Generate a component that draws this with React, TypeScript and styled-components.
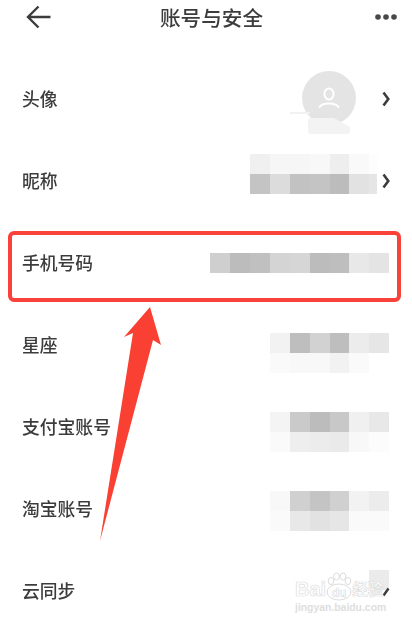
import React from "react";
import styled, { createGlobalStyle } from "styled-components";

const GlobalStyle = createGlobalStyle`
  html, body {
    margin: 0;
    padding: 0;
    background: #fff;
  }
`;

const Screen = styled.div`
  position: relative;
  width: 412px;
  height: 624px;
  overflow: hidden;
  background: #fff;
  color: #3c3c3c;
  font-family: "Noto Sans CJK SC", "Liberation Sans", sans-serif;
`;

const Header = styled.header`
  display: grid;
  grid-template-columns: 1fr auto 1fr;
  align-items: center;
  height: 34px;
  margin-bottom: 24px;
  padding: 0 15px 0 26px;
`;

const Title = styled.h1`
  margin: 0;
  font-size: 20.6px;
  font-weight: 500;
  line-height: 34px;
  filter: blur(0.4px);
`;

const HeaderIcon = styled.svg<{ $end?: boolean }>`
  display: block;
  justify-self: ${({ $end }) => ($end ? "end" : "start")};
  filter: blur(0.3px);
`;

const Row = styled.div`
  position: relative;
  display: flex;
  align-items: center;
  height: 82px;
  padding: 0 23px 0 22px;
`;

const Label = styled.span`
  flex: 1;
  padding-bottom: 2px;
  font-size: 17.8px;
  font-weight: 500;
  line-height: 26px;
  filter: blur(0.4px);
`;

const Mosaic = styled.div<{ $shift: number; $end?: boolean }>`
  display: flex;
  flex-direction: column;
  margin-top: ${({ $shift }) => ($shift > 0 ? $shift : 0)}px;
  margin-bottom: ${({ $shift }) => ($shift < 0 ? -$shift : 0)}px;
  margin-right: ${({ $end }) => ($end ? 0 : 5)}px;
`;

const MosaicLine = styled.div`
  display: flex;
  height: 20px;
`;

const Cell = styled.div<{ $tone: string; $w: number }>`
  width: ${({ $w }) => $w}px;
  background: ${({ $tone }) => $tone};
`;

const Chevron = styled.svg`
  display: block;
  flex: none;
  margin-right: -1px;
  filter: blur(0.3px);
`;

const Avatar = styled.div`
  position: relative;
  display: flex;
  align-items: center;
  justify-content: center;
  width: 54px;
  height: 54px;
  margin-right: 26px;
  margin-bottom: 2px;
  border-radius: 50%;
  background: #e4e4e4;
`;

const AvatarSmear = styled.div`
  position: absolute;
  left: 6px;
  top: 47px;
  width: 42px;
  height: 16px;
  border-radius: 3px;
  background: #f3f3f3;
  clip-path: polygon(0 0, 62% 0, 100% 55%, 100% 100%, 0 100%);
`;

const AvatarStreak = styled.div`
  position: absolute;
  left: -12px;
  top: 41px;
  width: 20px;
  height: 2px;
  background: #f1f1f1;
`;

const CutChevron = styled.svg`
  position: absolute;
  right: 22px;
  top: 37px;
`;

const RedFrame = styled.div`
  position: absolute;
  left: 8px;
  top: 231px;
  width: 393px;
  height: 71px;
  box-sizing: border-box;
  border: 4px solid #f9423a;
  border-radius: 6px;
`;

const RedArrow = styled.svg`
  position: absolute;
  left: 95px;
  top: 303px;
`;

const Watermark = styled.div`
  position: absolute;
  left: 295px;
  top: 570px;
  display: flex;
  flex-direction: column;
  width: 92px;
`;

const MarkLine = styled.div`
  display: flex;
  align-items: flex-end;
  height: 32px;
`;

const MarkWord = styled.span<{ $size: number }>`
  font-family: "Liberation Sans", "Noto Sans CJK SC", sans-serif;
  font-size: ${({ $size }) => $size}px;
  font-weight: 700;
  line-height: 25px;
  color: #fff;
  -webkit-text-stroke: 0.7px #e0e0e0;
`;

const MarkPaw = styled.div`
  position: relative;
  display: flex;
  align-items: flex-end;
  justify-content: center;
  width: 28px;
  height: 30px;
  margin: 0 -1px;
  font-family: "Liberation Sans", sans-serif;
  font-size: 12px;
  font-weight: 700;
  line-height: 18px;
  color: #fff;
  -webkit-text-stroke: 0.6px #dcdcdc;
`;

const PawShape = styled.svg`
  position: absolute;
  left: 0;
  top: 0;
  z-index: -0;
`;

const PawText = styled.span`
  position: relative;
`;

const MarkUrl = styled.span`
  font-family: "Liberation Sans", sans-serif;
  font-size: 10.4px;
  font-weight: 700;
  line-height: 12px;
  color: #dedede;
  white-space: nowrap;
`;

type Tone = [string, number];

type Item = {
  label: string;
  lines?: Tone[][];
  shift?: number;
  chevron?: boolean;
  avatar?: boolean;
  cut?: boolean;
};

const items: Item[] = [
  { label: "头像", avatar: true, chevron: true },
  {
    label: "昵称",
    shift: -14,
    chevron: true,
    lines: [
      [["#f0f0f0", 20], ["#f6f6f6", 20], ["#f6f6f6", 20], ["#f8f8f8", 20], ["#eeeeee", 19], ["#f9f9f9", 20], ["#fdfdfd", 8]],
      [["#c4c4c4", 20], ["#dcdcdc", 20], ["#c2c2c2", 20], ["#c4c4c4", 20], ["#bcbcbc", 19], ["#e2e2e2", 20], ["#e6e6e6", 8]],
    ],
  },
  {
    label: "手机号码",
    lines: [
      [["#cfcfcf", 20], ["#bcbcbc", 20], ["#c0c0c0", 20], ["#d4d4d4", 20], ["#d6d6d6", 20], ["#bcbcbc", 20], ["#bebebe", 19], ["#e8e8e8", 20], ["#e4e4e4", 20]],
    ],
  },
  {
    label: "星座",
    shift: 15,
    lines: [
      [["#f2f2f2", 20], ["#bebebe", 20], ["#d2d2d2", 20], ["#bebebe", 19], ["#ececec", 20], ["#e6e6e6", 20]],
      [["#fafafa", 20], ["#f8f8f8", 20], ["#f8f8f8", 20], ["#f2f2f2", 19], ["#fafafa", 20], ["#ffffff", 20]],
    ],
  },
  {
    label: "支付宝账号",
    shift: 9,
    lines: [
      [["#f4f4f4", 20], ["#cacaca", 20], ["#bcbcbc", 20], ["#c8c8c8", 19], ["#f0f0f0", 20], ["#e8e8e8", 20]],
      [["#fafafa", 20], ["#eeeeee", 20], ["#ececec", 20], ["#eaeaea", 19], ["#f8f8f8", 20], ["#fcfcfc", 20]],
    ],
  },
  {
    label: "淘宝账号",
    shift: 4,
    lines: [
      [["#f8f8f8", 20], ["#d0d0d0", 20], ["#c4c4c4", 20], ["#d0d0d0", 19], ["#f2f2f2", 20], ["#ececec", 20]],
      [["#fafafa", 20], ["#e8e8e8", 20], ["#e2e2e2", 20], ["#e6e6e6", 19], ["#fafafa", 20], ["#fafafa", 20]],
    ],
  },
  {
    label: "云同步",
    shift: -22,
    cut: true,
    lines: [[["#ebebeb", 20]]],
  },
];

function SettingRow({ item }: { item: Item }) {
  return (
    <Row>
      <Label>{item.label}</Label>
      {item.avatar && (
        <Avatar>
          <svg width="22" height="24" viewBox="0 0 22 24" fill="none" stroke="#fff" strokeWidth="2">
            <ellipse cx="11" cy="8" rx="4.6" ry="5.6" />
            <path d="M1.5 21c2-3 5-3.6 9.500-3.600s7.500.6 9.500 3.600" strokeLinecap="round" />
          </svg>
          <AvatarSmear />
          <AvatarStreak />
        </Avatar>
      )}
      {item.lines && (
        <Mosaic $shift={item.shift ?? 0} $end={!item.chevron}>
          {item.lines.map((line, i) => (
            <MosaicLine key={i}>
              {line.map(([tone, w], j) => (
                <Cell key={j} $tone={tone} $w={w} />
              ))}
            </MosaicLine>
          ))}
        </Mosaic>
      )}
      {item.chevron && (
        <Chevron width="8" height="16" viewBox="0 0 8 16" fill="none" stroke="#3c3c3c" strokeWidth="2.6">
          <path d="M1.500 1.500 6.300 8 1.500 14.500" />
        </Chevron>
      )}
      {item.cut && (
        <CutChevron width="8" height="10" viewBox="0 0 8 10" fill="none" stroke="#3c3c3c" strokeWidth="2.4">
          <path d="M6.500 1.500 1.500 8.500" />
        </CutChevron>
      )}
    </Row>
  );
}

export default function App() {
  return (
    <Screen>
      <GlobalStyle />
      <Header>
        <HeaderIcon width="25" height="24" viewBox="0 0 25 24" fill="none" stroke="#3c3c3c" strokeWidth="2.4">
          <path d="M24.500 12H2M12.500 1.500 2 12l10.500 10.500" />
        </HeaderIcon>
        <Title>账号与安全</Title>
        <HeaderIcon $end width="22" height="6" viewBox="0 0 22 6" fill="#484848">
          <circle cx="3" cy="3" r="2.800" />
          <circle cx="11" cy="3" r="2.800" />
          <circle cx="19" cy="3" r="2.800" />
        </HeaderIcon>
      </Header>
      {items.map((item) => (
        <SettingRow key={item.label} item={item} />
      ))}
      <RedFrame />
      <RedArrow width="68" height="240" viewBox="0 0 68 240" fill="#fa4032">
        <polygon points="55,4 66,42 58,37 5,238 38,30 29,34" />
      </RedArrow>
      <Watermark>
        <MarkLine>
          <MarkWord $size={20}>Bai</MarkWord>
          <MarkPaw>
            <PawShape width="28" height="30" viewBox="0 0 28 30" fill="#fff" stroke="#dcdcdc" strokeWidth="1">
              <ellipse cx="6" cy="9" rx="2.800" ry="3.600" />
              <ellipse cx="11.500" cy="4.500" rx="2.800" ry="3.600" />
              <ellipse cx="18" cy="4.500" rx="2.800" ry="3.600" />
              <ellipse cx="23" cy="9" rx="2.800" ry="3.600" />
              <ellipse cx="14" cy="20" rx="12" ry="8" />
            </PawShape>
            <PawText>du</PawText>
          </MarkPaw>
          <MarkWord $size={15.500}>经验</MarkWord>
        </MarkLine>
        <MarkUrl>jingyan.baidu.com</MarkUrl>
      </Watermark>
    </Screen>
  );
}
